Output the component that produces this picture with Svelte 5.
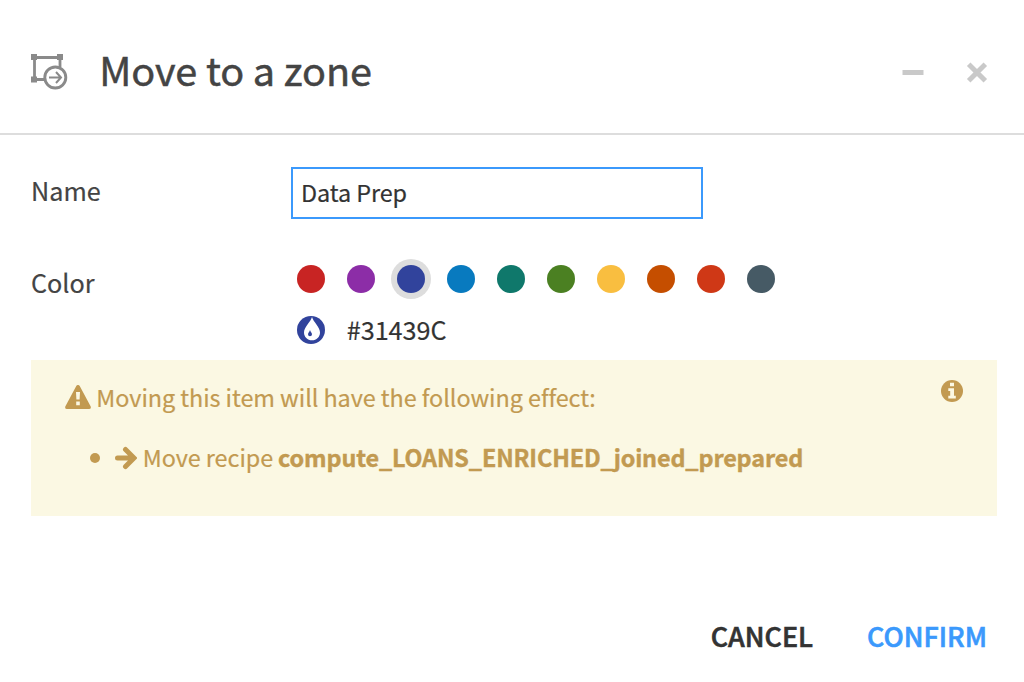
<script>
  const colors = ['#C82423', '#8C2DA7', '#31439C', '#087ABF', '#0F786B', '#4B8022', '#F9BE40', '#C54E00', '#CF3816', '#465A65'];
  let selected = $state('#31439C');
  let name = $state('Data Prep');
</script>

<div class="modal">
  <header>
    <svg class="zone" width="40" height="38" viewBox="0 0 40 38" fill="none" stroke="#8a8a8a">
      <path d="M5.3 4.500H30V14M16 26.500H4.500M4.500 4.500V27" stroke-width="2.800" />
      <path d="M1 1h6v6H1zM27 1h6v6h-6zM1 23.500h6v6H1z" fill="#8a8a8a" stroke="none" />
      <circle cx="25.300" cy="24.500" r="10.500" stroke-width="2.900" fill="#fff" />
      <path d="M19 24.500h11.500M26 19l5 5.500l-5 5.500" stroke-width="2" />
    </svg>
    <h1>Move to a zone</h1>
    <button class="icon minimize" aria-label="Minimize">
      <svg width="22" height="22" viewBox="0 0 22 22"><path d="M.5 9h21v5H.5z" fill="#c9c9c9" /></svg>
    </button>
    <button class="icon" aria-label="Close">
      <svg width="22" height="22" viewBox="0 0 22 22"><path d="M2.700 3.200L19.300 19.800M19.300 3.200L2.700 19.800" stroke="#c9c9c9" stroke-width="5" /></svg>
    </button>
  </header>

  <main>
    <div class="field name">
      <label for="zone-name">Name</label>
      <input id="zone-name" bind:value={name} />
    </div>
    <div class="field color">
      <span class="label">Color</span>
      <div>
        <div class="swatches">
          {#each colors as color}
            <button class="swatch" class:selected={selected === color} aria-label={color} onclick={() => (selected = color)}>
              <i style="background: {color}"></i>
            </button>
          {/each}
        </div>
        <div class="custom">
          <svg width="28" height="28" viewBox="0 0 28 28">
            <circle cx="14" cy="14" r="14" fill={selected} />
            <path d="M15 1C13.800 5.800 7 11 7 16.500C7 21 10.500 24.300 15 24.300S23 21 23 16.500C23 11 16.200 5.800 15 1Z" fill="#fff" />
            <path d="M13 14C12.600 15.700 11 16.700 11 18.300a2 2 0 0 0 4 0C15 16.700 13.400 15.700 13 14Z" fill={selected} />
          </svg>
          <span>{selected}</span>
        </div>
      </div>
    </div>

    <section class="notice">
      <div class="lead">
        <svg width="26" height="24" viewBox="0 0 26 24">
          <path fill-rule="evenodd" d="M11.400.8Q13-.9 14.600.8L25.700 21.500Q26.400 24 24 24H2Q-.4 24 .3 21.500ZM11 7l.4 7.600h3.200L15 7ZM11.200 16.500v3.800h3.600v-3.800Z" fill="#c29a51" />
        </svg>
        <span>Moving this item will have the following effect:</span>
        <svg class="info" width="22" height="22" viewBox="0 0 22 22">
          <circle cx="11" cy="11" r="11" fill="#c29a51" />
          <path d="M9 2.800h4v3.500H9zM7.300 8.200H13v7.600h1.800v2.800H7.300v-2.800h1.900V11H7.300z" fill="#fbf8e3" />
        </svg>
      </div>
      <ul>
        <li>
          <svg width="22" height="24" viewBox="0 0 22 24" fill="none" stroke="#c29a51" stroke-width="5" stroke-linecap="round">
            <path d="M2.500 12H18M10.500 3.500L19 12L10.500 20.500" />
          </svg>
          <span>Move recipe</span>
          <strong>compute_LOANS_ENRICHED_joined_prepared</strong>
        </li>
      </ul>
    </section>
  </main>

  <footer>
    <button class="action">CANCEL</button>
    <button class="action confirm">CONFIRM</button>
  </footer>
</div>

<style>
  :global(body) { background: #fff; }
  * { box-sizing: border-box; }
  .modal {
    display: flex;
    flex-direction: column;
    width: 1024px;
    height: 682px;
    overflow: hidden;
    background: #fff;
    color: #444;
    font-family: "Noto Sans CJK SC", "Noto Sans", sans-serif;
    font-size: 25.200px;
    line-height: 36px;
    white-space: nowrap;
    -webkit-text-stroke: .2px currentColor;
  }
  svg { display: block; flex: none; }
  button { border: 0; padding: 0; background: none; font: inherit; color: inherit; }
  header {
    display: flex;
    align-items: center;
    height: 135px;
    padding: 10px 36px 0 30px;
    border-bottom: 2px solid #ddd;
  }
  h1 { flex: 1; margin: 0 0 6px 29.200px; font-size: 39.600px; font-weight: 400; line-height: 60px; letter-spacing: -.100px; -webkit-text-stroke-width: .5px; }
  .icon { width: 22px; height: 22px; }
  .minimize { margin-right: 42px; }
  main { padding: 32px 27px 0 31px; }
  .field { display: flex; }
  .field > label, .label { width: 260px; }
  .name { height: 92px; }
  .name label { padding-top: 5px; }
  input {
    width: 412px;
    height: 52px;
    padding: 0 8px 2px;
    border: 2px solid #3b99fc;
    border-radius: 0;
    outline: 0;
    background: #fff;
    color: #333;
    font: 400 23.400px "Noto Sans CJK SC", "Noto Sans", sans-serif;
    letter-spacing: -.080px;
    -webkit-text-stroke: .2px currentColor;
  }
  .color { height: 101px; }
  .label { padding-top: 5px; }
  .swatches { display: flex; gap: 10px; height: 40px; }
  .swatch { display: grid; place-items: center; width: 40px; height: 40px; border-radius: 50%; }
  .swatch.selected { background: #ddd; }
  i { width: 28px; height: 28px; border-radius: 50%; }
  .custom { display: flex; align-items: center; gap: 21.700px; height: 36px; margin-top: 13px; padding-left: 6px; color: #333; font-size: 25.200px; }
  .custom span { margin-top: -2px; }
  .notice { height: 156px; padding: 20px 34px; background: #fbf8e3; color: #c29a51; font-size: 23.400px; letter-spacing: -.060px; }
  .lead { display: flex; align-items: center; gap: 5.300px; height: 36px; }
  .lead > svg:first-child { margin-top: -2px; }
  .lead span { margin-top: -2px; }
  .lead .info { margin: -14px 0 0 auto; }
  ul { margin: 25px 0 0; padding: 0 0 0 25px; list-style: none; }
  li { display: flex; align-items: center; }
  li::before { content: ""; width: 10px; height: 10px; margin-right: 15px; border-radius: 50%; background: currentColor; }
  li span { margin: -2px 5px 0 5.800px; }
  strong { margin-top: -2px; font-weight: 700; letter-spacing: -.140px; -webkit-text-stroke-width: .4px; }
  footer { display: flex; justify-content: flex-end; gap: 54px; margin-top: auto; padding: 0 37px 28px 0; }
  .action { font-size: 26.900px; font-weight: 500; color: #333; -webkit-text-stroke: .6px currentColor; }
  .action.confirm { color: #3b99fc; }
</style>
